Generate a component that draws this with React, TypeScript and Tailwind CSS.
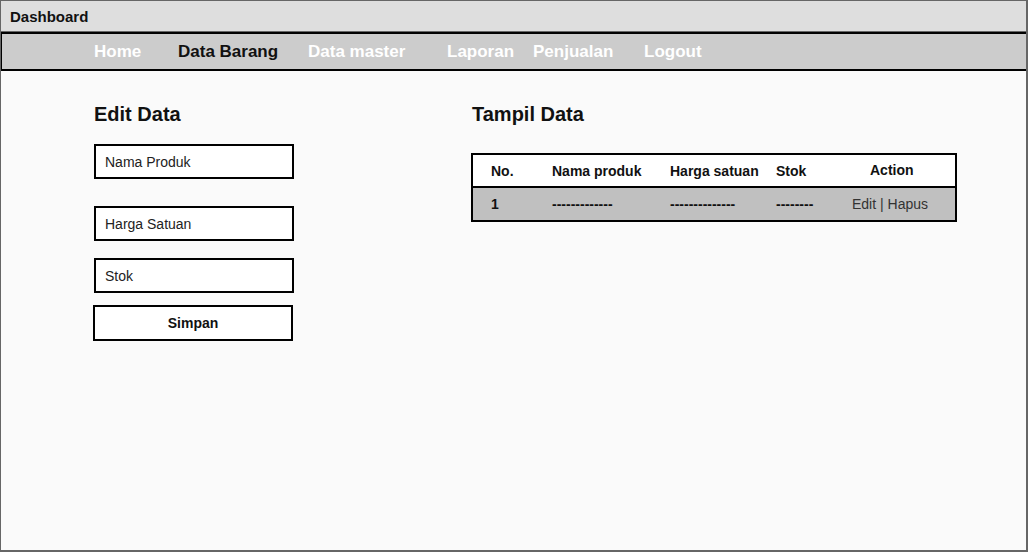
import React from "react";

const font = { fontFamily: '"Liberation Sans", Arial, sans-serif' };

function Field({ label, className = "" }: { label: string; className?: string }) {
  return (
    <div className={`h-[35px] w-[200px] border-2 border-black bg-white flex items-center pl-[9px] pt-[2px] text-[14px] text-[#222] ${className}`}>
      {label}
    </div>
  );
}

export default function App() {
  const navItems: { label: string; w: string; active?: boolean }[] = [
    { label: "Home", w: "w-[84px]" },
    { label: "Data Barang", w: "w-[130px]", active: true },
    { label: "Data master", w: "w-[139px]" },
    { label: "Laporan", w: "w-[86px]" },
    { label: "Penjualan", w: "w-[111px]" },
    { label: "Logout", w: "w-[80px]" },
  ];
  return (
    <div
      style={font}
      className="w-[1028px] h-[552px] box-border border-t border-l border-r-2 border-b-2 border-[#666] bg-[#fafafa] flex flex-col overflow-hidden"
    >
      <div className="h-[31px] shrink-0 border-b border-[#666] bg-[#dedede] flex items-center pl-[9px] pt-[3px] text-[15px] font-bold text-[#111]">
        Dashboard
      </div>
      <div className="h-[39px] shrink-0 -ml-px border-y-2 border-l-2 border-black bg-[#cccccc] flex items-center pl-[92px]">
        {navItems.map((n) => (
          <div
            key={n.label}
            className={`${n.w} shrink-0 text-[17px] font-bold whitespace-nowrap ${n.active ? "text-[#111]" : "text-white"}`}
          >
            {n.label}
          </div>
        ))}
      </div>
      <div className="flex pt-[32px] pl-[93px]">
        <div className="w-[378px] flex flex-col">
          <div className="text-[20px] leading-[23px] font-bold text-[#111] mb-[18px]">Edit Data</div>
          <Field label="Nama Produk" />
          <Field label="Harga Satuan" className="mt-[27px]" />
          <Field label="Stok" className="mt-[17px]" />
          <div className="mt-[12px] -ml-px h-[36px] w-[200px] border-2 border-black bg-white flex items-center justify-center pt-[1px] text-[14px] font-bold text-[#111]">
            Simpan
          </div>
        </div>
        <div className="flex flex-col">
          <div className="text-[20px] leading-[23px] font-bold text-[#111] mb-[27px]">Tampil Data</div>
          <div className="-ml-px w-[486px] border-2 border-black text-[14px]">
            <div className="h-[33px] bg-white border-b-2 border-black flex items-center pt-[2px] font-bold text-[#111]">
              <div className="w-[79px] pl-[18px]">No.</div>
              <div className="w-[118px]">Nama produk</div>
              <div className="w-[106px]">Harga satuan</div>
              <div className="w-[52px]">Stok</div>
              <div className="pl-[42px] mb-[2px]">Action</div>
            </div>
            <div className="h-[32px] bg-[#c0c0c0] flex items-center pt-[1px] text-[#111]">
              <div className="w-[79px] pl-[18px] font-bold">1</div>
              <div className="w-[118px] font-bold">-------------</div>
              <div className="w-[106px] font-bold">--------------</div>
              <div className="w-[52px] font-bold">--------</div>
              <div className="pl-[24px] text-[#333]">Edit | Hapus</div>
            </div>
          </div>
        </div>
      </div>
    </div>
  );
}
